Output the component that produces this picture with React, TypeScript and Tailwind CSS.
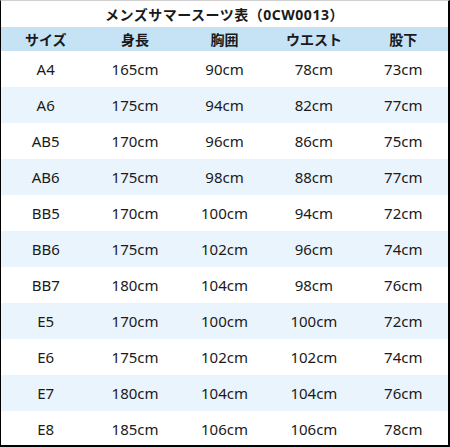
import React from 'react';

const rows: string[][] = [
  ['A4', '165cm', '90cm', '78cm', '73cm'],
  ['A6', '175cm', '94cm', '82cm', '77cm'],
  ['AB5', '170cm', '96cm', '86cm', '75cm'],
  ['AB6', '175cm', '98cm', '88cm', '77cm'],
  ['BB5', '170cm', '100cm', '94cm', '72cm'],
  ['BB6', '175cm', '102cm', '96cm', '74cm'],
  ['BB7', '180cm', '104cm', '98cm', '76cm'],
  ['E5', '170cm', '100cm', '100cm', '72cm'],
  ['E6', '175cm', '102cm', '102cm', '74cm'],
  ['E7', '180cm', '104cm', '104cm', '76cm'],
  ['E8', '185cm', '106cm', '106cm', '78cm'],
];

const headers = ['サイズ', '身長', '胸囲', 'ウエスト', '股下'];

export default function App() {
  return (
    <div
      className="w-[450px] h-[447px] bg-white border-l border-t border-t-[#d0d0d0] border-l-black border-r-2 border-b-2 border-black text-[#1a1a1a] overflow-hidden"
      style={{ fontFamily: '"Noto Sans", "Noto Sans CJK JP", sans-serif' }}
    >
      {/* Title */}
      <div className="h-[26px] flex items-center justify-center text-[14px] font-bold tracking-[0.5px]">
        メンズサマースーツ表（0CW0013）
      </div>

      {/* Header */}
      <div className="grid grid-cols-5 h-[24px] bg-[#c6e3f6] text-[14px] font-bold">
        {headers.map((h) => (
          <div key={h} className="flex items-center justify-center">
            {h}
          </div>
        ))}
      </div>

      {/* Body */}
      {rows.map((r, i) => (
        <div
          key={r[0]}
          className={`grid grid-cols-5 h-[36px] text-[15px] ${i % 2 === 1 ? 'bg-[#eaf4fc]' : 'bg-white'}`}
        >
          {r.map((c, j) => (
            <div key={j} className="flex items-center justify-center">
              {c}
            </div>
          ))}
        </div>
      ))}
    </div>
  );
}
